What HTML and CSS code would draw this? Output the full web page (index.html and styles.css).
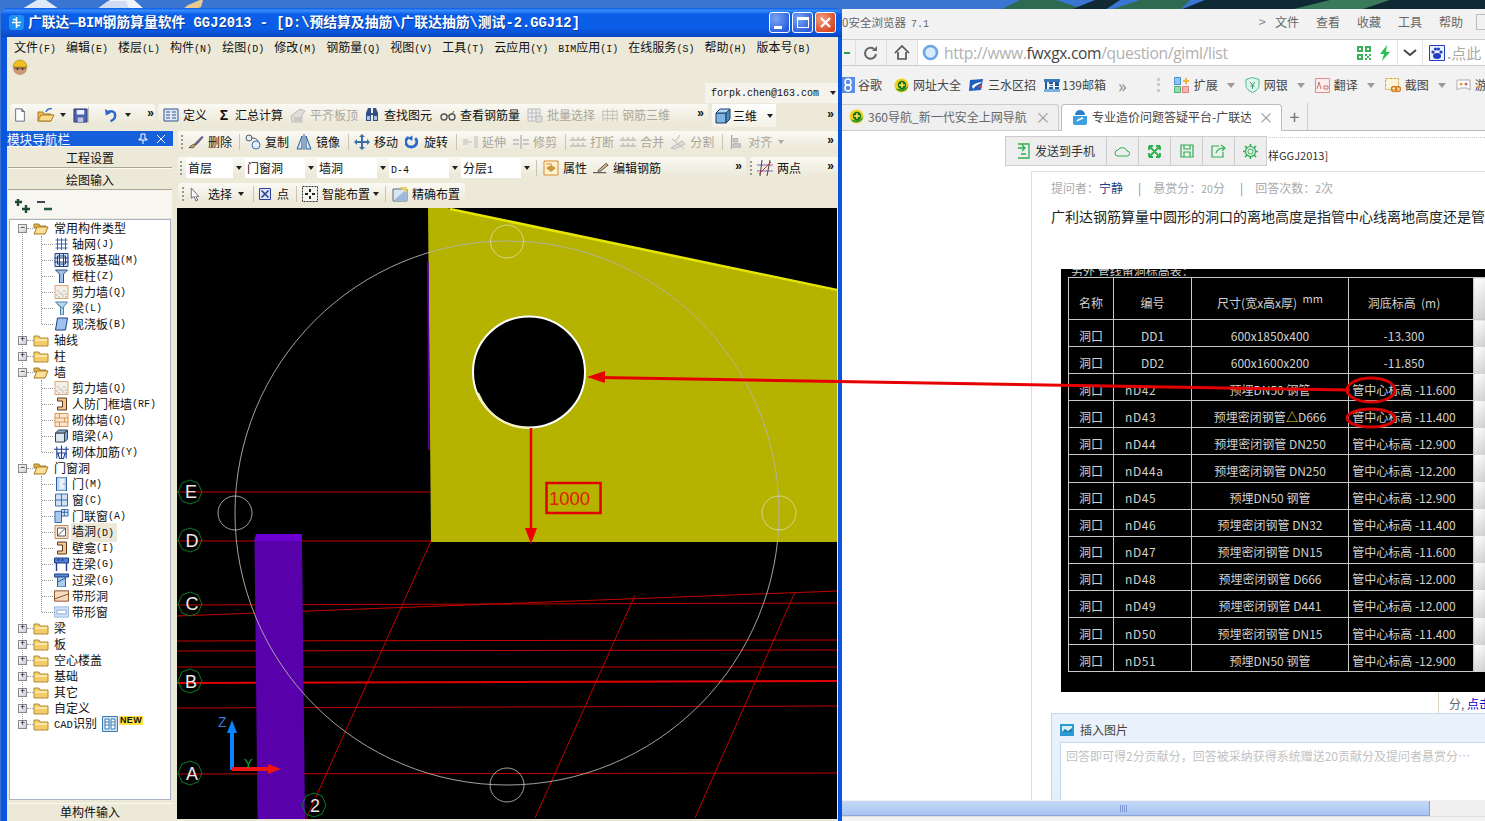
FILE: index.html
```html
<!DOCTYPE html>
<html lang="zh-CN">
<head>
<meta charset="utf-8">
<title>广联达钢筋算量软件</title>
<link rel="stylesheet" href="styles.css">
</head>
<body>
<svg class="defs" width="0" height="0" aria-hidden="true">
<symbol id="new" viewBox="0 0 16 16"><path d="M3 1h7l3 3v11H3z" fill="#fff" stroke="#56607a"/><path d="M10 1v3h3z" fill="#cfd6e4" stroke="#56607a"/></symbol>
<symbol id="open" viewBox="0 0 18 16"><path d="M1 5h5l1 2h7v7H1z" fill="#eebb55" stroke="#a87a20"/><path d="M1 14l3-6h13l-3 6z" fill="#fbdc8c" stroke="#a87a20"/><path d="M9 5c1-3 4-4 6-3" fill="none" stroke="#3a70c0" stroke-width="1.4"/></symbol>
<symbol id="save" viewBox="0 0 16 16"><path d="M1 1h14v14H1z" fill="#4e62ad" stroke="#2c3a78"/><path d="M4 2h8v5H4z" fill="#eef"/><path d="M5 10h6v5H5z" fill="#b9c3e0"/></symbol>
<symbol id="undo" viewBox="0 0 14 16"><path d="M3 5c4-3 9-2 9 3 0 3-2 5-5 6" fill="none" stroke="#2a68cc" stroke-width="2.6"/><path d="M1 1l1 7 6-3z" fill="#2a68cc"/></symbol>
<symbol id="def" viewBox="0 0 16 16"><path d="M1 2h14v12H1z" fill="#dfe8f6" stroke="#35548c"/><path d="M3 5h4M3 8h4M3 11h4M9 5h4M9 8h4M9 11h4" stroke="#35548c"/></symbol>
<symbol id="level" viewBox="0 0 16 16"><path d="M1 9l9-7 5 2-3 4v7H2z" fill="#ddd" stroke="#bbb"/><path d="M4 10h7v4H4z" fill="#c8c8c0"/></symbol>
<symbol id="find" viewBox="0 0 16 16"><path d="M2 6l2-5h3v5h2V1h3l2 5v8H9V8H7v6H2z" fill="#2f4f86"/><path d="M3 9h3v4H3zM10 9h3v4h-3z" fill="#a9c3e8"/></symbol>
<symbol id="glasses" viewBox="0 0 16 16"><circle cx="4" cy="10" r="3" fill="none" stroke="#555" stroke-width="1.4"/><circle cx="12" cy="10" r="3" fill="none" stroke="#555" stroke-width="1.4"/><path d="M7 9c1-1 1-1 2 0M12 7l2-3" stroke="#555" fill="none"/></symbol>
<symbol id="batch" viewBox="0 0 16 16"><path d="M1 2h12v12H1z" fill="#eee" stroke="#bbb"/><path d="M1 6h12M1 10h12M5 2v12M9 2v12" stroke="#bbb"/><path d="M9 9h6v6H9z" fill="#ddd" stroke="#bbb"/></symbol>
<symbol id="cage" viewBox="0 0 18 16"><path d="M1 2v13M6 1v14M12 1v14M17 2v13M1 4h16M1 8h16M1 12h16" stroke="#bdbdb5" fill="none"/></symbol>
<symbol id="cube" viewBox="0 0 16 16"><path d="M1 5h10v10H1z" fill="#7fb4e0" stroke="#1a3f6b"/><path d="M1 5l4-4h10l-4 4z" fill="#b3d6f2" stroke="#1a3f6b"/><path d="M11 5l4-4v10l-4 4z" fill="#4d88bd" stroke="#1a3f6b"/></symbol>
<symbol id="brush" viewBox="0 0 17 16"><path d="M1 14c3-3 5-4 7-3l-2 3z" fill="#d9a85c" stroke="#555"/><path d="M7 10l8-8 1 1-7 8z" fill="#7a5ac0" stroke="#555"/></symbol>
<symbol id="copy" viewBox="0 0 16 16"><circle cx="4" cy="4" r="3" fill="#e6eef9" stroke="#556"/><circle cx="11" cy="11" r="4" fill="#e6eef9" stroke="#3a6fb0"/><path d="M7 4c3 0 5 1 6 3" fill="none" stroke="#556"/></symbol>
<symbol id="mirror" viewBox="0 0 16 16"><path d="M6 2L1 15h5zM10 2l5 13h-5z" fill="#cfe0f5" stroke="#2a5f9e"/><path d="M8 0v16" stroke="#2a5f9e"/></symbol>
<symbol id="move" viewBox="0 0 16 16"><path d="M8 0l3 3H9v4h4V5l3 3-3 3V9H9v4h2l-3 3-3-3h2V9H3v2L0 8l3-3v2h4V3H5z" fill="#3a6ea8"/></symbol>
<symbol id="rot" viewBox="0 0 14 14"><path d="M4 2a6 5.500 0 1 0 7 1" fill="none" stroke="#2a68cc" stroke-width="3"/><path d="M8 0L3 3l5 3z" fill="#2a68cc"/></symbol>
<symbol id="ext" viewBox="0 0 16 16"><path d="M1 8h9M1 6h5M1 10h5M13 2v12M15 2v12" stroke="#bbb" fill="none"/></symbol>
<symbol id="trim" viewBox="0 0 16 16"><path d="M0 6h6M0 10h6M10 6h6M10 10h6M8 1v14" stroke="#bbb" fill="none" stroke-width="1.5"/></symbol>
<symbol id="brk" viewBox="0 0 16 16"><path d="M0 6h16M0 12h16M3 3v3M8 3v3M13 3v3M3 9v3M8 9v3M13 9v3" stroke="#c0c0b8" fill="none" stroke-width="1.4"/></symbol>
<symbol id="split" viewBox="0 0 16 16"><path d="M1 14l11-7 3 3-10 5z" fill="#ddd" stroke="#bbb"/><path d="M2 5l12 10M10 1l-5 7" stroke="#bbb"/></symbol>
<symbol id="alg" viewBox="0 0 12 16"><path d="M1 0v16" stroke="#aaa" stroke-width="1.6"/><path d="M3 4h5v4H3zM3 10h8v4H3z" fill="#ccc" stroke="#aaa"/></symbol>
<symbol id="prop" viewBox="0 0 16 16"><path d="M1 1h14v14H1z" fill="#fff3d0" stroke="#d88a30"/><path d="M3 8l5-3 5 3-5 4z" fill="#c99a40"/><path d="M3 4h6" stroke="#d88a30"/></symbol>
<symbol id="pen" viewBox="0 0 17 16"><path d="M0 13h14" stroke="#333"/><path d="M5 11l9-8 2 2-9 7z" fill="#e0c080" stroke="#444"/></symbol>
<symbol id="two" viewBox="0 0 16 16"><path d="M0 5h16M0 11h16" stroke="#8a5ac0"/><path d="M5 0L3 16M13 0l-3 16" stroke="#444"/><path d="M2 14l12-12" stroke="#d03030"/></symbol>
<symbol id="sel" viewBox="0 0 10 16"><path d="M1 1v11l3-2 2 5 2-1-2-4h3z" fill="#fff" stroke="#667"/></symbol>
<symbol id="pt" viewBox="0 0 12 12"><path d="M.5.500h11v11H.5z" fill="#dfe6f6" stroke="#2a3f9a"/><path d="M2.500 2.500l7 7M9.500 2.500l-7 7" stroke="#2a3f9a" stroke-width="1.6"/></symbol>
<symbol id="smart" viewBox="0 0 16 16"><path d="M.5.500h15v15H.5z" fill="#f4f4f0" stroke="#333" stroke-dasharray="2 1"/><path d="M3 8h3M10 8h3M8 3v3M8 10v3" stroke="#222" stroke-width="2"/></symbol>
<symbol id="exact" viewBox="0 0 16 16"><path d="M1 3h14v12H1z" fill="#d9e6f6" stroke="#666"/><path d="M1 15L15 3v12z" fill="#9fb7d8"/><path d="M7 1h8v6z" fill="#e8cf70"/></symbol>
<symbol id="fold" viewBox="0 0 16 13"><path d="M1 2h5l1 2h8v8H1z" fill="#f4cd6a" stroke="#b48a30"/><path d="M2 5h12v2H2z" fill="#fbe7a8"/></symbol>
<symbol id="foldo" viewBox="0 0 16 13"><path d="M1 2h5l1 2h6v2H1z" fill="#ddb050" stroke="#a87a20"/><path d="M1 12l3-7h11l-3 7z" fill="#fbe098" stroke="#a87a20"/></symbol>
<symbol id="i-grid" viewBox="0 0 14 14"><path d="M1 3h12M1 7h12M1 11h12M3 1v12M7 1v12M11 1v12" stroke="#3a66b0" stroke-width="1"/></symbol>
<symbol id="i-raft" viewBox="0 0 14 14"><path d="M.5.500h13v13H.5z" fill="#cfe0f6" stroke="#1f3f86"/><path d="M3 3h8v8H3z" fill="#fff" stroke="#1f3f86"/><path d="M0 5h14M0 9h14M5 0v14M9 0v14" stroke="#1f3f86"/></symbol>
<symbol id="i-col" viewBox="0 0 14 14"><path d="M1 1h12L9 5v9H5V5z" fill="#9cc0ea" stroke="#26507f"/></symbol>
<symbol id="i-shear" viewBox="0 0 14 14"><path d="M.5.500h13v13H.5z" fill="#f4efe6" stroke="#d8a878"/><path d="M2 10h1M5 8h1M8 11h1M11 9h1M4 12h1M9 6h1M3 6h1M7 9h1M11 12h1" stroke="#777"/></symbol>
<symbol id="i-beam" viewBox="0 0 14 14"><path d="M1 1h12L9 6v8H6V6z" fill="#bcd6ee" stroke="#4a86a8"/><path d="M3 3l6 5" stroke="#4a86a8"/></symbol>
<symbol id="i-slab" viewBox="0 0 14 14"><path d="M3 1h10l-2 12H1z" fill="#9fc2ee" stroke="#1f3f86"/></symbol>
<symbol id="i-rf" viewBox="0 0 14 14"><path d="M3 1h9v12H3v-3h5V4H3z" fill="#f2c68e" stroke="#5a3a1a"/></symbol>
<symbol id="i-brick" viewBox="0 0 14 14"><path d="M.5.500h13v13H.5z" fill="#fbe6cc" stroke="#d89858"/><path d="M0 5h14M0 9h14M5 1v4M10 5v4M5 9v4" stroke="#d89858"/></symbol>
<symbol id="i-dark" viewBox="0 0 14 14"><path d="M1 4h9v9H1z" fill="#dce8f2" stroke="#345"/><path d="M1 4l3-3h9l-3 3zM10 4l3-3v9l-3 3z" fill="#8aa8c8" stroke="#345"/></symbol>
<symbol id="i-reb" viewBox="0 0 16 14"><path d="M0 4h16M3 1v13M8 0v14M13 1v13M4 8h8l-2 6H6z" fill="none" stroke="#1f3f9a" stroke-width="1.2"/></symbol>
<symbol id="i-door" viewBox="0 0 14 14"><path d="M2 0h10v14H2z" fill="#bcd6f2" stroke="#2a5fa0"/><path d="M5 2h5v10H5z" fill="#e8f0fa"/><path d="M9 7h1" stroke="#234"/></symbol>
<symbol id="i-win" viewBox="0 0 14 14"><path d="M1 1h12v12H1z" fill="#cfe2f6" stroke="#3a6ea8"/><path d="M7 1v12M1 7h12" stroke="#3a6ea8"/></symbol>
<symbol id="i-dw" viewBox="0 0 16 14"><path d="M1 2h7v12H1z" fill="#a8c8ee" stroke="#2a5fa0"/><path d="M8 0h7v7H8z" fill="#dce9f8" stroke="#2a5fa0"/><path d="M11 0v7M8 3h7" stroke="#2a5fa0"/></symbol>
<symbol id="i-hole" viewBox="0 0 14 14"><path d="M.5.500h13v13H.5z" fill="#fbe9d8" stroke="#c88858"/><path d="M3 3h8v8H3z" fill="#fff" stroke="#555"/><path d="M3 11l8-8" stroke="#555"/></symbol>
<symbol id="i-link" viewBox="0 0 14 14"><path d="M0 1h14v5H0z" fill="#4f7fd0" stroke="#1f3f86"/><path d="M2 6v8M12 6v8M3 3h2M7 3h2" stroke="#1f3f86" stroke-width="1.4"/></symbol>
<symbol id="i-lin" viewBox="0 0 14 14"><path d="M0 1h14v3H0z" fill="#5a8ad0" stroke="#1f3f86"/><path d="M3 4h8v10H3z" fill="#a8ccf0" stroke="#2a5fa0"/><path d="M3 9l8-4" stroke="#2a5fa0"/></symbol>
<symbol id="i-bh" viewBox="0 0 16 12"><path d="M.5.500h15v11H.5z" fill="#f5dcc0" stroke="#8a4a20"/><path d="M1 9l14-5" stroke="#8a4a20"/></symbol>
<symbol id="i-bw" viewBox="0 0 16 12"><path d="M.5.500h15v11H.5z" fill="#cfe0f6" stroke="#9ab8dc"/><path d="M3 4h10v4H3z" fill="#fff" stroke="#8aa8d0"/></symbol>
<symbol id="i-cad" viewBox="0 0 16 16"><path d="M.5.500h15v15H.5z" fill="#cfe6f4" stroke="#3a7ab0"/><path d="M3 3h4v10H3zM9 3h4v10H9z" fill="#fff" stroke="#3a7ab0"/><path d="M3 6h4M3 9h4M9 6h4M9 9h4" stroke="#3a7ab0"/></symbol>
<symbol id="plus360" viewBox="0 0 16 16"><circle cx="8" cy="8" r="7.500" fill="#f2d21c"/><path d="M2 11a7 7 0 0 0 13-3c-3 4-8 5-13 3z" fill="#2f9a2f"/><circle cx="8.500" cy="7.500" r="4.500" fill="#12701c"/><path d="M8.500 4.500v6M5.500 7.500h6" stroke="#f6e24c" stroke-width="1.8"/></symbol>
</svg>

<main class="desk">
<svg class="wall" viewBox="0 0 1485 10" preserveAspectRatio="none" aria-hidden="true">
<path d="M0 0h1485v10H0z" fill="#3b75d2"/>
<path d="M22 9l15-9h9l13 9zM98 9l12-9h13l12 9z" fill="#dfe9f7"/>
<path d="M100 9l10-9h24l10 9z" fill="#eef3fb"/>
<path d="M97 9l11-8h18l3 8z" fill="#cfdcf2"/>
<path d="M183 9l5-4 12-5h3l-2 7-5 2z" fill="#e9c98c"/>
<path d="M1000 10l20-10h36l30 10zM1110 10l30-10h50l-10 10z" fill="#2d6a4f"/>
<path d="M1070 10l25-10h25l-15 10zM1180 10l25-10h280v10z" fill="#0f2a34"/>
<path d="M1290 10l40-10h60l-30 10z" fill="#3a7a5a"/>
</svg>

<section class="browser">
<header class="b-title"><span>0安全浏览器&nbsp; <span class="ver">7.1</span></span>
<nav class="b-menu"><span class="gt">&gt;</span><span>文件</span><span>查看</span><span>收藏</span><span>工具</span><span>帮助</span><span class="boxy"></span></nav></header>
<div class="b-nav">
<span class="nb nb-f"><svg width="8" height="6" viewBox="0 0 8 6"><path d="M1 3h6" stroke="#2aa24a" stroke-width="2"/></svg></span>
<span class="nb"><svg width="16" height="16" viewBox="0 0 16 16"><path d="M13 9a5.500 5.500 0 1 1-2-5" fill="none" stroke="#666" stroke-width="2"/><path d="M9 6h5V1z" fill="#666"/></svg></span>
<span class="nb"><svg width="16" height="15" viewBox="0 0 16 15"><path d="M1 8l7-7 7 7M4 7v7h8V7" fill="none" stroke="#555" stroke-width="1.700"/></svg></span>
<div class="addr">
<svg width="17" height="17" viewBox="0 0 17 17"><circle cx="8.500" cy="8.500" r="6.500" fill="#d7ecfb" stroke="#6ba6e6" stroke-width="2.600"/></svg>
<span class="url">http://www.<b>fwxgx.com</b>/question/giml/list</span>
<svg class="qr" width="14" height="14" viewBox="0 0 14 14"><path d="M0 0h6v6H0zM8 0h6v6H8zM0 8h6v6H0zM2 2v2h2V2zM10 2v2h2V2zM2 10v2h2v-2zM8 8h2v2H8zM12 8h2v2h-2zM10 10h2v2h-2zM8 12h2v2H8zM12 12h2v2h-2z" fill-rule="evenodd" fill="#3cb05a"/></svg>
<svg class="bolt" width="12" height="16" viewBox="0 0 12 16"><path d="M8 0L1 9h4l-2 7 8-9H7z" fill="#25c255"/></svg>
<span class="chev"><svg width="14" height="8" viewBox="0 0 14 8"><path d="M1 1l6 5 6-5" fill="none" stroke="#444" stroke-width="2"/></svg></span>
<span class="paw"><svg width="16" height="16" viewBox="0 0 16 16"><path d="M.5.500h15v15H.5z" fill="#eaf0fc" stroke="#1f3fc0"/><ellipse cx="8" cy="11" rx="4" ry="3" fill="#1f3fc0"/><circle cx="4" cy="7" r="1.600" fill="#1f3fc0"/><circle cx="12" cy="7" r="1.600" fill="#1f3fc0"/><circle cx="6.500" cy="4" r="1.600" fill="#1f3fc0"/><circle cx="9.500" cy="4" r="1.600" fill="#1f3fc0"/></svg></span>
<span class="search">.点此</span>
</div>
</div>
<div class="b-marks">
<span class="bm bm-g"><svg width="13" height="16" viewBox="0 0 13 16"><path d="M0 0h13v16H0z" fill="#5b8de8"/><circle cx="6" cy="5" r="3" fill="none" stroke="#fff" stroke-width="1.500"/><circle cx="6" cy="11" r="3" fill="none" stroke="#fff" stroke-width="1.500"/></svg>谷歌</span>
<span class="bm"><svg width="15" height="15"><use href="#plus360"/></svg>网址大全</span>
<span class="bm"><svg width="15" height="14" viewBox="0 0 15 14"><path d="M1 2l13-1-2 11L0 13z" fill="#1f5fc0"/><path d="M3 8c3-3 7-4 10-4-2 2-6 3-9 7z" fill="#fff"/><path d="M9 8l4-1-1 4z" fill="#e03a3a"/></svg>三水区招</span>
<span class="bm bm-139"><svg width="16" height="15" viewBox="0 0 16 15"><path d="M0 1h16v3H0z" fill="#3a78b8"/><path d="M0 11h16v3H0z" fill="#7ab0dc"/><path d="M1 4h2v7H1zM5 4h4v2H5zM6 7h3v1H6zM5 9h4v2H5zM11 4h4v4h-4zM11 9h4v2h-4z" fill="#1f5a98"/></svg>139邮箱</span>
<span class="more">»</span>
<span class="grip2"></span>
<span class="bm"><svg width="16" height="16" viewBox="0 0 16 16"><path d="M.5.500h6v7h-6z" fill="#8ec4f0" stroke="#4a90d0"/><path d="M.5 9.500h6v6h-6z" fill="#9adcae" stroke="#4ab070"/><path d="M8.500 9.500h6v6h-6z" fill="#f4b4b4" stroke="#e08080"/><path d="M11 1h2v2h2v2h-2v2h-2V5H9V3h2z" fill="#f2b63a"/></svg>扩展</span><span class="cr"></span>
<span class="bm"><svg width="15" height="16" viewBox="0 0 15 16"><path d="M7.500 .5l6.500 2v6c0 3-3 5.500-6.500 7C4 14 1 11.500 1 8.500v-6z" fill="#e0f6ea" stroke="#4ab88a"/><path d="M5 5l2.500 3L10 5M7.500 8v4M5.500 9h4" stroke="#3a9a70" fill="none"/></svg>网银</span><span class="cr"></span>
<span class="bm"><svg width="15" height="15" viewBox="0 0 15 15"><path d="M.5.500h14v14H.5z" fill="#fdeeee" stroke="#e08a8a"/><path d="M2 11l2-7 2 7M9 8h4v3H9z" fill="none" stroke="#d07070"/></svg>翻译</span><span class="cr"></span>
<span class="bm"><svg width="16" height="16" viewBox="0 0 16 16"><path d="M.5 1.500h13v11H.5z" fill="#fbf4d8" stroke="#d8a840" stroke-dasharray="3 1"/><circle cx="9" cy="12" r="2.500" fill="none" stroke="#d88020" stroke-width="1.500"/><circle cx="13" cy="12" r="2.500" fill="none" stroke="#d88020" stroke-width="1.500"/></svg>截图</span><span class="cr"></span>
<span class="bm"><svg width="15" height="14" viewBox="0 0 15 14"><path d="M1 2h13v10l-3-2H4l-3 2z" fill="#fff" stroke="#aaa"/><circle cx="5" cy="6" r="1.500" fill="#d0a040"/><circle cx="10" cy="6" r="1.500" fill="#d06060"/></svg>游</span>
</div>
<div class="b-tabs">
<div class="tab"><svg width="15" height="15"><use href="#plus360"/></svg><span class="tab-t">360导航_新一代安全上网导航</span><span class="x">×</span></div>
<div class="tab on"><svg width="16" height="16" viewBox="0 0 16 16"><path d="M3 6a5 5 0 0 1 10 0z" fill="#2a7ec8"/><path d="M1 7h14v7a2 2 0 0 1-2 2H3a2 2 0 0 1-2-2z" fill="#3aa0e0"/><path d="M5 12c2-2 4-2 6-3" stroke="#fff" stroke-width="1.500" fill="none"/></svg><span class="tab-t">专业造价问题答疑平台-广联达</span><span class="x">×</span></div>
<span class="tabadd">+</span>
</div>
<div class="page">
<div class="float">
<span class="fl fl-send"><svg width="13" height="16" viewBox="0 0 13 16"><path d="M1 1h11v14H1M1 5h6M5 2l3 3-3 3M4 11h5" fill="none" stroke="#2db04f" stroke-width="1.300"/></svg>发送到手机</span>
<span class="fl"><svg width="17" height="11" viewBox="0 0 17 11"><path d="M4 10a3 3 0 0 1 0-6 5 5 0 0 1 9 1 2.500 2.500 0 0 1 0 5z" fill="none" stroke="#2db04f"/></svg></span>
<span class="fl"><svg width="13" height="13" viewBox="0 0 13 13"><path d="M1 1l11 11M12 1L1 12M1 1h4M1 1v4M12 1H8M12 1v4M1 12h4M1 12V8M12 12H8M12 12V8" stroke="#2db04f" stroke-width="1.800" fill="none"/></svg></span>
<span class="fl"><svg width="14" height="14" viewBox="0 0 14 14"><path d="M1 1h12v12H1zM4 1v4h6V1M4 13V8h6v5" fill="none" stroke="#2db04f" stroke-width="1.200"/></svg></span>
<span class="fl"><svg width="15" height="14" viewBox="0 0 15 14"><path d="M8 2H1v11h11V8M5 9c1-3 4-5 8-5M10 1l4 3-3 3" fill="none" stroke="#2db04f" stroke-width="1.200"/></svg></span>
<span class="fl"><svg width="15" height="15" viewBox="0 0 15 15"><circle cx="7.500" cy="7.500" r="2.500" fill="none" stroke="#2db04f"/><circle cx="7.500" cy="7.500" r="5" fill="none" stroke="#2db04f" stroke-width="1.200"/><path d="M7.500 0v3M7.500 12v3M0 7.500h3M12 7.500h3M2 2l2 2M11 11l2 2M13 2l-2 2M2 13l2-2" stroke="#2db04f" stroke-width="1.600"/></svg></span>
</div>
<div class="crumb">样GGJ2013]</div>
<article class="card">
<p class="meta">提问者：<a class="asker">宁静</a><span class="pipe">|</span>悬赏分：<span class="dg">20</span>分<span class="pipe">|</span>回答次数：<span class="dg">2</span>次</p>
<p class="q">广利达钢筋算量中圆形的洞口的离地高度是指管中心线离地高度还是管</p>
<div class="shot">
<div class="shot-cap">另外 管线留洞标高表：</div>
<table class="holes">
<colgroup><col class="c1"><col class="c2"><col class="c3"><col class="c4"><col class="c5"></colgroup>
<tr class="hd"><td>名称</td><td>编号</td><td>尺寸(宽x高x厚) &nbsp;<sup>mm</sup></td><td>洞底标高 &nbsp;(m)</td><td class="ex"></td></tr>
<tr><td>洞口</td><td>DD1</td><td>600x1850x400</td><td>-13.300</td><td class="ex"></td></tr>
<tr><td>洞口</td><td>DD2</td><td>600x1600x200</td><td>-11.850</td><td class="ex"></td></tr>
<tr><td>洞口</td><td class="l">nD42</td><td>预埋DN50 钢管</td><td>管中心标高 -11.600</td><td class="ex"></td></tr>
<tr><td>洞口</td><td class="l">nD43</td><td>预埋密闭钢管<span class="tri">△</span>D666</td><td>管中心标高 -11.400</td><td class="ex"></td></tr>
<tr><td>洞口</td><td class="l">nD44</td><td>预埋密闭钢管 DN250</td><td>管中心标高 -12.900</td><td class="ex"></td></tr>
<tr><td>洞口</td><td class="l">nD44a</td><td>预埋密闭钢管 DN250</td><td>管中心标高 -12.200</td><td class="ex"></td></tr>
<tr><td>洞口</td><td class="l">nD45</td><td>预埋DN50 钢管</td><td>管中心标高 -12.900</td><td class="ex"></td></tr>
<tr><td>洞口</td><td class="l">nD46</td><td>预埋密闭钢管 DN32</td><td>管中心标高 -11.400</td><td class="ex"></td></tr>
<tr><td>洞口</td><td class="l">nD47</td><td>预埋密闭钢管 DN15</td><td>管中心标高 -11.600</td><td class="ex"></td></tr>
<tr><td>洞口</td><td class="l">nD48</td><td>预埋密闭钢管 D666</td><td>管中心标高 -12.000</td><td class="ex"></td></tr>
<tr><td>洞口</td><td class="l">nD49</td><td>预埋密闭钢管 D441</td><td>管中心标高 -12.000</td><td class="ex"></td></tr>
<tr><td>洞口</td><td class="l">nD50</td><td>预埋密闭钢管 DN15</td><td>管中心标高 -11.400</td><td class="ex"></td></tr>
<tr><td>洞口</td><td class="l">nD51</td><td>预埋DN50 钢管</td><td>管中心标高 -12.900</td><td class="ex"></td></tr>
</table>
</div>
<div class="rew"><span class="rew-in">分, <a>点击</a></span></div>
<div class="answer">
<div class="ans-h"><svg width="14" height="12" viewBox="0 0 14 12"><path d="M0 0h14v12H0z" fill="#2a9ad0"/><path d="M2 2h10v6H2z" fill="#d8f0fa"/><path d="M2 8l3-3 3 2 4-3v4z" fill="#1f80b8"/></svg>插入图片</div>
<div class="ans-b">回答即可得2分贡献分，回答被采纳获得系统赠送20贡献分及提问者悬赏分…</div>
</div>
</article>
</div>
<div class="hbar"><div class="thumb"><span class="gr"></span></div></div>
</section>

<section class="win">
<header class="w-title">
<svg class="w-ico" width="15" height="15" viewBox="0 0 15 15"><rect width="15" height="15" rx="3" fill="#1e90f0"/><path d="M7.500 2v11M3 7.500h9M4 4.500h3M8 10.500h3" stroke="#fff" stroke-width="1.500"/></svg>
<h1 class="w-name">广联达—BIM钢筋算量软件 GGJ2013 - [D:\预结算及抽筋\广联达抽筋\测试-2.GGJ12]</h1>
<div class="w-btns">
<span class="wb"><i class="g-min"></i></span><span class="wb"><i class="g-max"></i></span><span class="wb close"><svg width="13" height="13" viewBox="0 0 13 13"><path d="M2 2l9 9M11 2l-9 9" stroke="#fff" stroke-width="2.200"/></svg></span>
</div>
</header>
<div class="client">
<nav class="menu">
<span>文件<i>(F)</i></span><span>编辑<i>(E)</i></span><span>楼层<i>(L)</i></span><span>构件<i>(N)</i></span><span>绘图<i>(D)</i></span><span>修改<i>(M)</i></span><span>钢筋量<i>(Q)</i></span><span>视图<i>(V)</i></span><span>工具<i>(T)</i></span><span>云应用<i>(Y)</i></span><span><i>BIM</i>应用<i>(I)</i></span><span>在线服务<i>(S)</i></span><span>帮助<i>(H)</i></span><span>版本号<i>(B)</i></span>
</nav>
<div class="hat"><svg width="16" height="16" viewBox="0 0 16 16"><circle cx="8" cy="9" r="7" fill="#c89878"/><path d="M1 8a7 7 0 0 1 14 0z" fill="#f0c020" stroke="#a88010" stroke-width=".6"/><circle cx="5.500" cy="10" r="1" fill="#322"/><circle cx="10.500" cy="10" r="1" fill="#322"/><path d="M2 9h12" stroke="#6a4a2a"/></svg></div>
<div class="email">forpk.chen@163.com<span class="car"></span></div>
<div class="row1">
<div class="band b1">
<svg class="a1" width="14" height="16"><use href="#new"/></svg>
<svg class="a2" width="18" height="16"><use href="#open"/></svg><span class="car c1"></span>
<svg class="a3" width="15" height="15"><use href="#save"/></svg><span class="sep s1"></span>
<svg class="a4" width="13" height="15"><use href="#undo"/></svg><span class="car c2"></span>
<span class="chv">»</span>
</div>
<div class="band b2">
<span class="t t-def"><svg class="ic"><use href="#def"/></svg>定义</span>
<span class="t t-sum"><b class="sig">Σ</b>汇总计算</span>
<span class="t off t-lev"><svg class="ic"><use href="#level"/></svg>平齐板顶</span>
<span class="t t-find"><svg class="ic"><use href="#find"/></svg>查找图元</span>
<span class="t t-view"><svg class="ic"><use href="#glasses"/></svg>查看钢筋量</span>
<span class="t off t-bat"><svg class="ic"><use href="#batch"/></svg>批量选择</span>
<span class="t off"><svg class="ic ic18"><use href="#cage"/></svg>钢筋三维</span>
<span class="chv ch2">»</span>
</div>
<div class="d3"><svg class="ic"><use href="#cube"/></svg>三维<span class="car c3"></span></div>
<span class="chv ch3">»</span>
</div>
<div class="work">
<aside class="nav">
<div class="nav-h"><span>模块导航栏</span><svg width="10" height="11" viewBox="0 0 10 11"><path d="M3 1h4v5h2v1H1V6h2zM5 7v4" stroke="#fff" fill="none"/></svg><svg width="10" height="10" viewBox="0 0 10 10"><path d="M1 1l8 8M9 1l-8 8" stroke="#fff"/></svg></div>
<div class="nav-b">工程设置</div>
<div class="nav-b">绘图输入</div>
<div class="nav-t">
<svg width="16" height="14" viewBox="0 0 16 14"><path d="M3 0v7M0 3h7M11 6v8M7 10h8" stroke="#1e4a30" stroke-width="2.400"/></svg>
<svg width="16" height="14" viewBox="0 0 16 14"><path d="M0 3h8" stroke="#445" stroke-width="2"/><path d="M7 10h8" stroke="#1e5a50" stroke-width="2.400"/></svg>
</div>
<div class="tree">
<div class="r"><span class="ex">−</span><svg class="f"><use href="#foldo"/></svg>常用构件类型</div>
<div class="kids">
<div class="c"><svg class="k"><use href="#i-grid"/></svg>轴网<i>(J)</i></div>
<div class="c"><svg class="k"><use href="#i-raft"/></svg>筏板基础<i>(M)</i></div>
<div class="c"><svg class="k"><use href="#i-col"/></svg>框柱<i>(Z)</i></div>
<div class="c"><svg class="k"><use href="#i-shear"/></svg>剪力墙<i>(Q)</i></div>
<div class="c"><svg class="k"><use href="#i-beam"/></svg>梁<i>(L)</i></div>
<div class="c"><svg class="k"><use href="#i-slab"/></svg>现浇板<i>(B)</i></div>
</div>
<div class="r"><span class="ex">+</span><svg class="f"><use href="#fold"/></svg>轴线</div>
<div class="r"><span class="ex">+</span><svg class="f"><use href="#fold"/></svg>柱</div>
<div class="r"><span class="ex">−</span><svg class="f"><use href="#foldo"/></svg>墙</div>
<div class="kids">
<div class="c"><svg class="k"><use href="#i-shear"/></svg>剪力墙<i>(Q)</i></div>
<div class="c"><svg class="k"><use href="#i-rf"/></svg>人防门框墙<i>(RF)</i></div>
<div class="c"><svg class="k"><use href="#i-brick"/></svg>砌体墙<i>(Q)</i></div>
<div class="c"><svg class="k"><use href="#i-dark"/></svg>暗梁<i>(A)</i></div>
<div class="c"><svg class="k"><use href="#i-reb"/></svg>砌体加筋<i>(Y)</i></div>
</div>
<div class="r"><span class="ex">−</span><svg class="f"><use href="#foldo"/></svg>门窗洞</div>
<div class="kids">
<div class="c"><svg class="k"><use href="#i-door"/></svg>门<i>(M)</i></div>
<div class="c"><svg class="k"><use href="#i-win"/></svg>窗<i>(C)</i></div>
<div class="c"><svg class="k"><use href="#i-dw"/></svg>门联窗<i>(A)</i></div>
<div class="c"><svg class="k"><use href="#i-hole"/></svg><span class="cur">墙洞<i>(D)</i></span></div>
<div class="c"><svg class="k"><use href="#i-rf"/></svg>壁龛<i>(I)</i></div>
<div class="c"><svg class="k"><use href="#i-link"/></svg>连梁<i>(G)</i></div>
<div class="c"><svg class="k"><use href="#i-lin"/></svg>过梁<i>(G)</i></div>
<div class="c"><svg class="k"><use href="#i-bh"/></svg>带形洞</div>
<div class="c"><svg class="k"><use href="#i-bw"/></svg>带形窗</div>
</div>
<div class="r"><span class="ex">+</span><svg class="f"><use href="#fold"/></svg>梁</div>
<div class="r"><span class="ex">+</span><svg class="f"><use href="#fold"/></svg>板</div>
<div class="r"><span class="ex">+</span><svg class="f"><use href="#fold"/></svg>空心楼盖</div>
<div class="r"><span class="ex">+</span><svg class="f"><use href="#fold"/></svg>基础</div>
<div class="r"><span class="ex">+</span><svg class="f"><use href="#fold"/></svg>其它</div>
<div class="r"><span class="ex">+</span><svg class="f"><use href="#fold"/></svg>自定义</div>
<div class="r"><span class="ex">+</span><svg class="f"><use href="#fold"/></svg><span><i class="cad">CAD</i>识别</span><svg class="cadi"><use href="#i-cad"/></svg><em class="newb">NEW</em></div>
</div>
<div class="nav-b nb3">单构件输入</div>
</aside>
<div class="right">
<div class="row2 band">
<span class="grip"></span>
<span class="t m7"><svg class="ic"><use href="#brush"/></svg>删除</span><span class="sep"></span>
<span class="t m7"><svg class="ic"><use href="#copy"/></svg>复制</span>
<span class="t"><svg class="ic"><use href="#mirror"/></svg>镜像</span><span class="sep"></span>
<span class="t m7"><svg class="ic"><use href="#move"/></svg>移动</span>
<span class="t t-rot"><svg class="ic14"><use href="#rot"/></svg>旋转</span><span class="sep"></span>
<span class="t off m7"><svg class="ic"><use href="#ext"/></svg>延伸</span>
<span class="t off"><svg class="ic"><use href="#trim"/></svg>修剪</span><span class="sep n4"></span>
<span class="t off m6"><svg class="ic"><use href="#brk"/></svg>打断</span>
<span class="t off m6"><svg class="ic"><use href="#brk"/></svg>合并</span>
<span class="t off"><svg class="ic"><use href="#split"/></svg>分割</span><span class="sep n4"></span>
<span class="t off t-alg"><svg class="ic12"><use href="#alg"/></svg>对齐<span class="car lt"></span></span>
<span class="chv end">»</span>
</div>
<div class="row3">
<div class="band b3">
<span class="grip"></span>
<span class="cb first"><span class="cb-t">首层</span><span class="car"></span></span>
<span class="cb"><span class="cb-t">门窗洞</span><span class="car"></span></span>
<span class="cb"><span class="cb-t">墙洞</span><span class="car"></span></span>
<span class="cb"><span class="cb-t"><i>D-4</i></span><span class="car"></span></span>
<span class="cb"><span class="cb-t">分层<i>1</i></span><span class="car"></span></span>
<span class="sep s3"></span>
<span class="t m6"><svg class="ic"><use href="#prop"/></svg>属性</span>
<span class="t"><svg class="ic"><use href="#pen"/></svg>编辑钢筋</span>
<span class="chv end">»</span>
</div>
<div class="band b4">
<span class="grip"></span>
<span class="t"><svg class="ic"><use href="#two"/></svg>两点</span>
<span class="chv end">»</span>
</div>
</div>
<div class="row4"><div class="band b5">
<span class="grip"></span>
<span class="t t-sel"><svg class="ic10"><use href="#sel"/></svg>选择<span class="car"></span></span><span class="sep"></span>
<span class="t t-pt"><svg class="ic12"><use href="#pt"/></svg>点</span><span class="sep"></span>
<span class="t t-sm"><svg class="ic"><use href="#smart"/></svg>智能布置<span class="car"></span></span><span class="sep n6"></span>
<span class="t"><svg class="ic"><use href="#exact"/></svg>精确布置</span>
</div></div>
<svg class="cad3d" viewBox="177 208 660 611">
<rect x="177" y="208" width="660" height="611" fill="#000"/>
<path d="M428 208L447 208 837 291 837 542 431 542z" fill="#b5b300"/>
<path d="M450 209L837 290" stroke="#e6e600" stroke-width="2.500"/>
<path d="M428 262l1 188" stroke="#6000b8" stroke-width="1.500"/>
<ellipse cx="529" cy="372" rx="56" ry="55.500" fill="#000" stroke="#fff" stroke-width="2"/>
<path d="M478 393c10 24 30 35 51 35" fill="none" stroke="#f2f2b0" stroke-width="2"/>
<g class="red">
<path d="M177 492h253M177 541l254 0M431 541L306 819M177 605l660-2M177 616l660-25M177 641l660-1M177 651l660-1M177 667h660M177 683l660-2M177 708l660-2M177 774l660-1M635 595L535 818M795 592L695 818"/>
<path class="thick" d="M177 683l660-2"/>
</g>
<path d="M254.500 541L257.500 819H305L302 541z" fill="#5800aa"/>
<path d="M256 534h46v7h-48z" fill="#6c00d4"/>
<circle cx="507" cy="513" r="272" class="ring"/>
<circle cx="507" cy="241.500" r="16.500" class="ring y"/>
<circle cx="235" cy="513" r="17" class="ring"/>
<circle cx="779" cy="513" r="17" class="ring y"/>
<circle cx="507" cy="785" r="17" class="ring"/>
<g class="gr-h">
<path d="M190 480l8 3 4 9-4 9-8 3-8-3-4-9 4-9z"/>
<path d="M190 528l8 3 4 9-4 9-8 3-8-3-4-9 4-9z"/>
<path d="M190 592l8 3 4 9-4 9-8 3-8-3-4-9 4-9z"/>
<path d="M190 669l8 3 4 9-4 9-8 3-8-3-4-9 4-9z"/>
<path d="M190 761l8 3 4 9-4 9-8 3-8-3-4-9 4-9z"/>
<path d="M314 793l8 3 4 9-4 9-8 3-8-3-4-9 4-9z"/>
</g>
<g class="lab">
<text x="191" y="498">E</text><text x="192" y="547">D</text><text x="192" y="610">C</text><text x="191" y="688">B</text><text x="192" y="780">A</text><text x="315" y="812">2</text>
</g>
<path d="M232 770V732" stroke="#0a84ff" stroke-width="4"/><path d="M232 720l5 13h-10z" fill="#0a84ff"/>
<path d="M232 769h38" stroke="#f01414" stroke-width="4"/><path d="M281 769l-13-5v10z" fill="#f01414"/>
<text x="218" y="727" class="zl">Z</text><text x="244" y="768" class="yl">Y</text>
<path d="M531 428v102" stroke="#ee0000" stroke-width="2.500"/><path d="M531 544l-6-16h12z" fill="#ee0000"/>
<rect x="546.500" y="483" width="54" height="30" fill="none" stroke="#e00000" stroke-width="2.500"/>
<text x="549" y="505" class="thou">1000</text>
</svg>
</div>
</div>
</div>
</section>

<svg class="notes" viewBox="0 0 1485 821" aria-hidden="true">
<path d="M600 377.500L1350 390" stroke="#e60000" stroke-width="3"/>
<path d="M587 377l18-6v12z" fill="#e60000"/>
<ellipse cx="1371" cy="390" rx="24" ry="12" fill="none" stroke="#d80000" stroke-width="3"/>
<ellipse cx="1371" cy="418" rx="24" ry="9" fill="none" stroke="#d80000" stroke-width="3"/>
</svg>
</main>
</body>
</html>
```

FILE: styles.css
```css
* { box-sizing: border-box; }
html, body { margin: 0; height: 100%; overflow: hidden; }
body { font: 12px/16px "Noto Sans CJK SC", "Noto Sans", sans-serif; color: #111; background: #3b75d2; }
.defs { position: absolute; }
i { font: normal 10px/16px "Liberation Mono", "Noto Sans CJK SC", monospace; }
svg { display: block; flex: none; }
p, h1 { margin: 0; }

.desk { position: relative; width: 1485px; height: 821px; overflow: hidden; background: #3b75d2; }
.wall { position: absolute; left: 0; top: 0; width: 1485px; height: 10px; }
.notes { position: absolute; left: 0; top: 0; width: 1485px; height: 821px; pointer-events: none; }

/* ---------- browser window ---------- */
.browser { position: absolute; left: 842px; top: 9px; width: 643px; height: 812px; background: #f2f2f2; display: flex; flex-direction: column; overflow: hidden; color: #444; }
.b-title { height: 30px; display: flex; align-items: center; justify-content: space-between; color: #666; font-size: 11.500px; white-space: nowrap; padding-bottom: 4px; }
.ver { font: 10px "Liberation Mono", monospace; }
.b-menu { display: flex; align-items: center; gap: 17px; color: #666; font-size: 12px; }
.gt { font-size: 13px; margin-right: -8px; color: #888; }
.boxy { width: 12px; height: 16px; border: 1px solid #bbb; border-right: 0; margin-left: -4px; margin-right: -3px; }
.b-nav { height: 27px; display: flex; border-top: 1px solid #ccc; border-bottom: 1px solid #ccc; }
.nb { width: 31px; display: flex; align-items: center; justify-content: center; border-right: 1px solid #ddd; }
.nb-f { width: 14px; justify-content: flex-start; padding-left: 1px; }
.addr { flex: 1; background: #fff; display: flex; align-items: center; padding-left: 4px; min-width: 0; }
.url { font: 15.600px/24px "Open Sans", sans-serif; color: #b0b0b0; margin-left: 5px; white-space: nowrap; letter-spacing: -.32px; }
.url b { font-weight: 400; color: #444; }
.qr { margin-left: auto; transform: translateX(1px); }
.bolt { margin-left: 9px; }
.chev { width: 26px; height: 25px; margin-left: 6px; border-left: 1px solid #e4e4e4; border-right: 1px solid #e4e4e4; display: flex; align-items: center; justify-content: center; }
.paw { margin-left: 6px; }
.search { color: #aaa; font-size: 15px; margin-left: 2px; width: 38px; white-space: nowrap; flex: none; }
.b-marks { height: 38px; display: flex; align-items: center; white-space: nowrap; color: #444; }
.bm { display: flex; align-items: center; gap: 4px; margin-right: 8px; font-size: 12px; }
.bm-g { margin-right: 12px; gap: 3px; }
.bm-139 { gap: 2px; margin-right: 12px; }
.more { font-size: 18px; color: #888; }
.grip2 { width: 3px; height: 14px; margin: 0 14px 0 30px; border-left: 3px dotted #ccc; }
.cr { width: 0; height: 0; border: 4px solid transparent; border-top: 5px solid #999; border-bottom: 0; margin: 1px 10px 0 1px; }
.b-tabs { height: 28px; margin-top: -1px; display: flex; align-items: flex-end; border-bottom: 1px solid #bbb; white-space: nowrap; }
.tab { width: 217px; height: 27px; margin-bottom: -1px; display: flex; align-items: center; padding: 0 0 2px 7px; gap: 4px; background: #efefef; border: 1px solid #ccc; border-left: 0; border-radius: 0 3px 0 0; color: #666; }
.tab.on { width: 221px; margin-left: 2px; padding-left: 10px; background: #fff; border-left: 1px solid #bbb; border-color: #bbb; border-bottom-color: #fff; border-radius: 4px 4px 0 0; color: #444; }
.tab-t { flex: 1; overflow: hidden; min-width: 0; }
.x { width: 30px; color: #999; font-size: 15px; text-align: center; flex: none; margin-left: -4px; }
.tabadd { width: 26px; height: 27px; font-size: 18px; line-height: 26px; text-align: center; color: #777; border-right: 1px solid #ccc; }
.page { flex: 1; position: relative; background: #fff; overflow: hidden; min-height: 0; }
.float { position: absolute; left: 163px; top: 5px; height: 30px; display: flex; background: #eee; border: 1px solid #ccc; z-index: 2; color: #333; }
.fl { width: 32px; display: flex; align-items: center; justify-content: center; border-left: 1px solid #ccc; }
.fl:first-child { border-left: 0; }
.fl-send { width: 100px; gap: 5px; }
.crumb { height: 34px; margin: 6px 0 0 426px; border-top: 1px dotted #ccc; padding-top: 9px; font-size: 11px; color: #333; white-space: nowrap; }
.card { margin-left: 189px; width: 700px; border-top: 1px solid #ddd; border-left: 1px solid #ddd; padding: 8px 0 0 19px; }
.meta { height: 18px; color: #aaa; white-space: nowrap; }
.asker { color: #1a3f86; }
.pipe { margin: 0 12px 0 15px; color: #888; }
.dg { font-size: 10.500px; }
.q { margin-top: 8px; font-size: 14px; line-height: 20px; color: #222; white-space: nowrap; }
.shot { margin: 43px 0 0 10px; width: 424px; height: 423px; background: #000; overflow: hidden; color: #d0d0d0; padding-left: 7px; }
.shot-cap { height: 8px; line-height: 6px; margin-top: -1px; padding-left: 3px; overflow: hidden; }
.holes { border-collapse: collapse; table-layout: fixed; width: 417px; margin-top: 1px; }
.c1 { width: 45px; } .c2 { width: 78px; } .c3 { width: 157px; } .c4 { width: 125px; } .c5 { width: 12px; }
.holes td { height: 27.100px; border: 1px solid #c8c8c8; padding: 5px 0 0; text-align: center; line-height: 14px; white-space: nowrap; overflow: hidden; }
.holes td:nth-child(4) { padding-right: 14px; }
.holes .hd td { height: 42px; padding-top: 8px; }
.holes td.ex { border-width: 0; }
.holes .hd td.ex { border-width: 1px 0; }
.holes td.l { text-align: left; padding-left: 11px; letter-spacing: .6px; }
.holes sup { font-size: 11px; line-height: 0; }
.tri { color: #f0e020; }
.rew { height: 21px; display: flex; padding-left: 387px; color: #666; }
.rew-in { border-left: 1px solid #e0d8c0; padding: 4px 0 0 10px; white-space: nowrap; height: 21px; }
.rew a { color: #0000cc; }
.answer { border: 1px solid #c5d9ec; border-right: 0; height: 90px; background: linear-gradient(#eaf3fc, #e4effa); padding-left: 8px; }
.ans-h { height: 28px; padding-top: 3px; display: flex; align-items: center; gap: 6px; color: #444; }
.ans-b { height: 60px; background: #fff; border: 1px solid #c5d9ec; border-right: 0; padding: 5px; color: #c2c2c2; white-space: nowrap; }
.hbar { height: 17px; flex: none; background: #f0f0f0; border-bottom: 1px solid #ddd; margin-bottom: 4px; padding-top: 1px; }
.thumb { width: 588px; height: 15px; background: linear-gradient(#c6d8f6, #a8c4f0); border-right: 1px solid #7f9cd8; border-bottom: 1px solid #8ba6dc; display: flex; align-items: center; padding-left: 278px; }
.gr { width: 7px; height: 7px; background: repeating-linear-gradient(90deg, #7f9cd8 0 1px, transparent 1px 2px); }

/* ---------- GGJ window ---------- */
.win { position: absolute; left: 1px; top: 8px; width: 841px; height: 813px; border-radius: 8px 8px 0 0; background: #0a55e0; display: flex; flex-direction: column; overflow: hidden; }
.w-title { height: 29px; flex: none; display: flex; align-items: center; padding-left: 8px; background: linear-gradient(#0a5ae6 0, #3a8ffa 8%, #0a5ee8 22%, #0a5de6 70%, #0a4fd0 90%, #0843b8 100%); }
.w-ico { margin-right: 4px; }
.w-name { font: bold 13.800px/20px "Liberation Mono", "Noto Sans CJK SC", monospace; color: #fff; white-space: nowrap; flex: 1; min-width: 0; overflow: hidden; text-shadow: 1px 1px 0 #0a3a9a; padding-top: 3px; height: 23px; }
.w-btns { display: flex; gap: 2px; margin-right: 6px; }
.wb { width: 21px; height: 21px; border: 1px solid #fff; border-radius: 3px; background: radial-gradient(circle at 30% 30%, #7aa4f0, #2a5de0 80%); display: flex; align-items: center; justify-content: center; }
.wb.close { background: radial-gradient(circle at 30% 30%, #f0a080, #d8431e 80%); }
.g-min { width: 8px; height: 3px; background: #fff; margin: 9px 4px 0 0; }
.g-max { width: 12px; height: 11px; border: 1px solid #fff; border-top-width: 3px; }
.client { flex: 1; margin: 0 4px 0 6px; background: #ece9d8; display: flex; flex-direction: column; min-height: 0; }
.menu { height: 21px; flex: none; display: flex; align-items: center; gap: 10px; padding: 1px 0 0 7px; white-space: nowrap; }
.hat { height: 21px; padding: 1px 0 0 5px; flex: none; }
.email { align-self: flex-end; width: 133px; height: 20px; margin: 4px 0 1px; background: #f5f4ec; display: flex; align-items: center; justify-content: space-between; padding: 0 2px 0 6px; font: 10px "Liberation Mono", monospace; flex: none; }
.row1 { height: 23px; flex: none; display: flex; align-items: stretch; }
.band { background: linear-gradient(#faf9f3, #ece9d8 85%); display: flex; align-items: center; white-space: nowrap; border-radius: 3px; padding-bottom: 1px; }
.b1 { width: 145px; margin-left: 3px; padding-left: 3px; }
.a2 { margin-left: 10px; } .a3 { margin-left: 7px; } .a4 { margin-left: 10px; }
.car { width: 0; height: 0; border: 3px solid transparent; border-top: 4px solid #222; border-bottom: 0; flex: none; }
.c1 { margin-left: 5px; } .s1 { margin: 0 8px 0 6px; } .c2 { margin-left: 8px; }
.sep { width: 1px; height: 16px; background: #c8c5b4; flex: none; margin: 0 5px 0 0; }
.sep.n4 { margin-right: 4px; }
.sep.n6 { margin-right: 6px; }
.chv { font: bold 12px/12px "Liberation Sans", sans-serif; color: #111; margin-top: -4px; }
.b1 .chv { margin-left: auto; margin-right: 1px; }
.b2 { width: 550px; margin-left: 3px; padding-left: 5px; }
.t { display: flex; align-items: center; gap: 4px; margin-right: 8px; flex: none; }
.ic { width: 16px; height: 16px; } .ic14 { width: 13px; height: 14px; } .ic12 { width: 12px; height: 14px; } .ic10 { width: 10px; height: 15px; }
.off { color: #a9a79c; }
.sig { font: bold 14px/16px "Liberation Sans", sans-serif; width: 14px; text-align: center; }
.t-def { margin-right: 10px; } .t-sum { margin-right: 7px; gap: 4px; } .t-lev { margin-right: 6px; } .t-find { margin-right: 8px; } .t-view { margin-right: 7px; } .t-bat { margin-right: 7px; }
.ch2 { margin-left: auto; margin-right: 4px; }
.d3 { width: 64px; margin-left: 4px; background: linear-gradient(#fff, #f3f1e6); display: flex; align-items: center; gap: 2px; padding-left: 3px; }
.c3 { margin-left: 8px; }
.ch3 { align-self: center; margin-left: auto; margin-right: 4px; }

.work { flex: 1; min-height: 0; display: flex; gap: 4px; margin-top: 4px; }
.nav { width: 166px; flex: none; display: flex; flex-direction: column; }
.nav-h { height: 15px; background: #1660dc; color: #fff; display: flex; align-items: center; font-size: 12.600px; flex: none; white-space: nowrap; }
.nav-h span { flex: 1; }
.nav-h svg { margin-right: 7px; }
.nav-h svg:last-child { margin-left: 1px; }
.nav-b { height: 22px; flex: none; text-align: center; line-height: 21px; background: #ece9d8; border-bottom: 1px solid #a8a595; border-top: 1px solid #fbfaf3; margin: 0 1px; }
.nav-t { height: 28px; flex: none; display: flex; align-items: center; gap: 6px; padding: 4px 0 0 7px; margin: 0 1px; background: #f7f6f0; }
.tree { flex: 1; min-height: 0; margin: 1px 2px 3px; background: #fff; border: 1px solid #a9b4c4; position: relative; white-space: nowrap; }
.tree::before { content: ""; position: absolute; left: 12px; top: 8px; height: 497px; border-left: 1px dotted #999; }
.r, .c { height: 16px; display: flex; align-items: center; position: relative; }
.r { padding-left: 8px; }
.ex { width: 9px; height: 9px; border: 1px solid #888; background: linear-gradient(135deg, #fff, #ccc); font: 9px/7px "Liberation Mono", monospace; text-align: center; color: #000; flex: none; margin-right: 6px; position: relative; z-index: 1; }
.r::before { content: ""; position: absolute; left: 17px; top: 8px; width: 6px; border-top: 1px dotted #999; }
.f { width: 16px; height: 13px; margin-right: 5px; }
.kids { margin-left: 31px; border-left: 1px dotted #999; position: relative; }
.c { padding-left: 12px; }
.c > i { margin-top: 1px; }
.c::before { content: ""; position: absolute; left: 0; top: 8px; width: 11px; border-top: 1px dotted #999; }
.c:last-child::after { content: ""; position: absolute; left: -1px; top: 9px; height: 7px; width: 1px; background: #fff; }
.k { width: 15px; height: 14px; margin-right: 3px; }
.cur { background: #ece9d8; padding: 0 3px 0 1px; margin-left: -1px; }
.cad { font-size: 10.500px; }
.cadi { width: 16px; height: 16px; margin-left: 5px; }
.newb { font: bold 9px/9px "Liberation Sans", sans-serif; color: #111; background: #ffe040; margin: -7px 0 0 1px; padding: 0 1px; letter-spacing: .4px; }
.nb3 { height: 18px; line-height: 16px; border-bottom: 0; }

.right { flex: 1; min-width: 0; display: flex; flex-direction: column; }
.row2 { height: 23px; margin: 0 0 2px 1px; flex: none; padding-left: 3px; }
.grip { width: 2px; height: 14px; margin: 0 5px 0 0; border-left: 2px dotted #999; flex: none; }
.t.m7 { margin-right: 7px; }
.t.m6 { margin-right: 6px; }
.t-rot { gap: 6px; }
.t-alg { gap: 6px; margin-left: 3px; }
.lt { border-top-color: #aaa; }
.end { margin-left: auto; margin-right: 4px; }
.row3 { height: 23px; flex: none; margin: 1px 0 2px; display: flex; gap: 4px; }
.b3 { flex: 1; padding-left: 2px; margin-left: 1px; }
.b3 .grip { margin-right: 4px; }
.b4 { width: 88px; padding-left: 0; }
.cb { width: 72px; height: 20px; display: flex; align-items: center; flex: none; }
.cb-t { flex: 1; background: #fff; height: 20px; line-height: 20px; padding-left: 2px; }
.cb .car { margin: 0 3px; }
.cb.first { width: 59px; }
.s3 { margin: 0 6px 0 3px; }
.row4 { height: 23px; flex: none; margin: 1px 0 2px; display: flex; }
.b5 { width: 287px; margin-left: 1px; padding-left: 4px; }
.t-sel { gap: 8px; margin: 0 9px 0 1px; }
.t-sel .car { margin-left: -2px; }
.t-pt { gap: 6px; margin: 0 7px 0 0; }
.t-sm { margin-right: 6px; }
.t-sm .car { margin-left: -1px; }
.cad3d { width: 660px; height: 611px; flex: none; }
.red path { fill: none; stroke: #c40000; stroke-width: 1; }
.red .thick { stroke: #e00000; stroke-width: 2; }
.ring { fill: none; stroke: #b4b4ac; stroke-width: .9; }
.ring.y { stroke: #d8d8a0; }
.gr-h path { fill: none; stroke: #0a7a2a; stroke-width: 1; }
.lab text { font: 18px "Liberation Sans", sans-serif; fill: #e8e8e8; text-anchor: middle; }
.zl { font: 14px "Liberation Sans", sans-serif; fill: #3a78d8; }
.yl { font: 13px "Liberation Sans", sans-serif; fill: #0caa3a; }
.thou { font: 18.500px "Liberation Sans", sans-serif; fill: #e02000; }
```
